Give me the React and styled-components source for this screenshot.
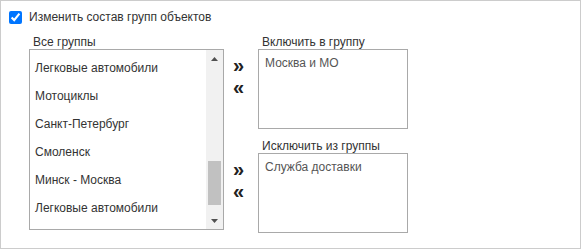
import React from 'react';
import styled, { createGlobalStyle } from 'styled-components';

const Global = createGlobalStyle`
  html, body { margin: 0; padding: 0; background: #fff; }
  body { font-family: "Liberation Sans", Arial, sans-serif; }
`;

const Panel = styled.div`
  box-sizing: border-box;
  width: 581px;
  height: 249px;
  border: 1px solid #cccccc;
  padding: 10px 0 0 8px;
  font-size: 12px;
  color: #333;
`;

const CheckRow = styled.label`
  display: flex;
  align-items: center;
  gap: 7px;
  height: 13px;
  line-height: 13px;
`;

const Check = styled.input`
  margin: 0;
  width: 13px;
  height: 13px;
  accent-color: #0075ff;
`;

const Body = styled.div`
  display: flex;
  margin-top: 11px;
  margin-left: 20px;
`;

const LeftCol = styled.div`
  display: flex;
  flex-direction: column;
  width: 195px;
`;

const Label = styled.div`
  height: 14px;
  line-height: 14px;
  padding-left: 4px;
  white-space: nowrap;
`;

const ListBox = styled.div`
  box-sizing: border-box;
  display: flex;
  height: 181px;
  border: 1px solid #a9a9a9;
  background: #fff;
  overflow: hidden;
`;

const Items = styled.div`
  flex: 1;
  padding-top: 4px;
`;

const Item = styled.div`
  height: 28px;
  line-height: 28px;
  padding-left: 5px;
  white-space: nowrap;
`;

const Scrollbar = styled.div`
  width: 17px;
  background: #f1f1f1;
  display: flex;
  flex-direction: column;
`;

const ScrollBtn = styled.div`
  height: 17px;
  display: flex;
  align-items: center;
  justify-content: center;
`;

const Track = styled.div`
  flex: 1;
  position: relative;
`;

const Thumb = styled.div`
  position: absolute;
  left: 2px;
  right: 2px;
  top: 94px;
  height: 44px;
  background: #c1c1c1;
`;

const RightCol = styled.div`
  display: flex;
  flex-direction: column;
  gap: 10px;
  margin-left: 9px;
`;

const Pair = styled.div`
  display: flex;
`;

const Arrows = styled.div`
  width: 25px;
  padding-top: 19px;
  display: flex;
  flex-direction: column;
  font-size: 20px;
  font-weight: bold;
  line-height: 22px;
  color: #222;
`;

const Arrow = styled.span`
  height: 22px;
`;

const Group = styled.div`
  display: flex;
  flex-direction: column;
`;

const TargetBox = styled.div`
  box-sizing: border-box;
  width: 150px;
  height: 80px;
  border: 1px solid #a9a9a9;
  padding: 6px 6px;
  line-height: 14px;
  color: #555;
`;

const Tri = ({ up }) => (
  <svg width="7" height="4" viewBox="0 0 7 4">
    <path d={up ? 'M0 4 L3.5 0 L7 4 Z' : 'M0 0 L3.5 4 L7 0 Z'} fill="#505050" />
  </svg>
);

const items = [
  'Легковые автомобили',
  'Мотоциклы',
  'Санкт-Петербург',
  'Смоленск',
  'Минск - Москва',
  'Легковые автомобили',
];

const targets = [
  { label: 'Включить в группу', value: 'Москва и МО' },
  { label: 'Исключить из группы', value: 'Служба доставки' },
];

export default function App() {
  return (
    <>
      <Global />
      <Panel>
        <CheckRow>
          <Check type="checkbox" defaultChecked />
          <span>Изменить состав групп объектов</span>
        </CheckRow>
        <Body>
          <LeftCol>
            <Label>Все группы</Label>
            <ListBox>
              <Items>
                {items.map((t, i) => (
                  <Item key={i}>{t}</Item>
                ))}
              </Items>
              <Scrollbar>
                <ScrollBtn><Tri up /></ScrollBtn>
                <Track><Thumb /></Track>
                <ScrollBtn><Tri /></ScrollBtn>
              </Scrollbar>
            </ListBox>
          </LeftCol>
          <RightCol>
            {targets.map((g) => (
              <Pair key={g.label}>
                <Arrows>
                  <Arrow>»</Arrow>
                  <Arrow>«</Arrow>
                </Arrows>
                <Group>
                  <Label>{g.label}</Label>
                  <TargetBox>{g.value}</TargetBox>
                </Group>
              </Pair>
            ))}
          </RightCol>
        </Body>
      </Panel>
    </>
  );
}
